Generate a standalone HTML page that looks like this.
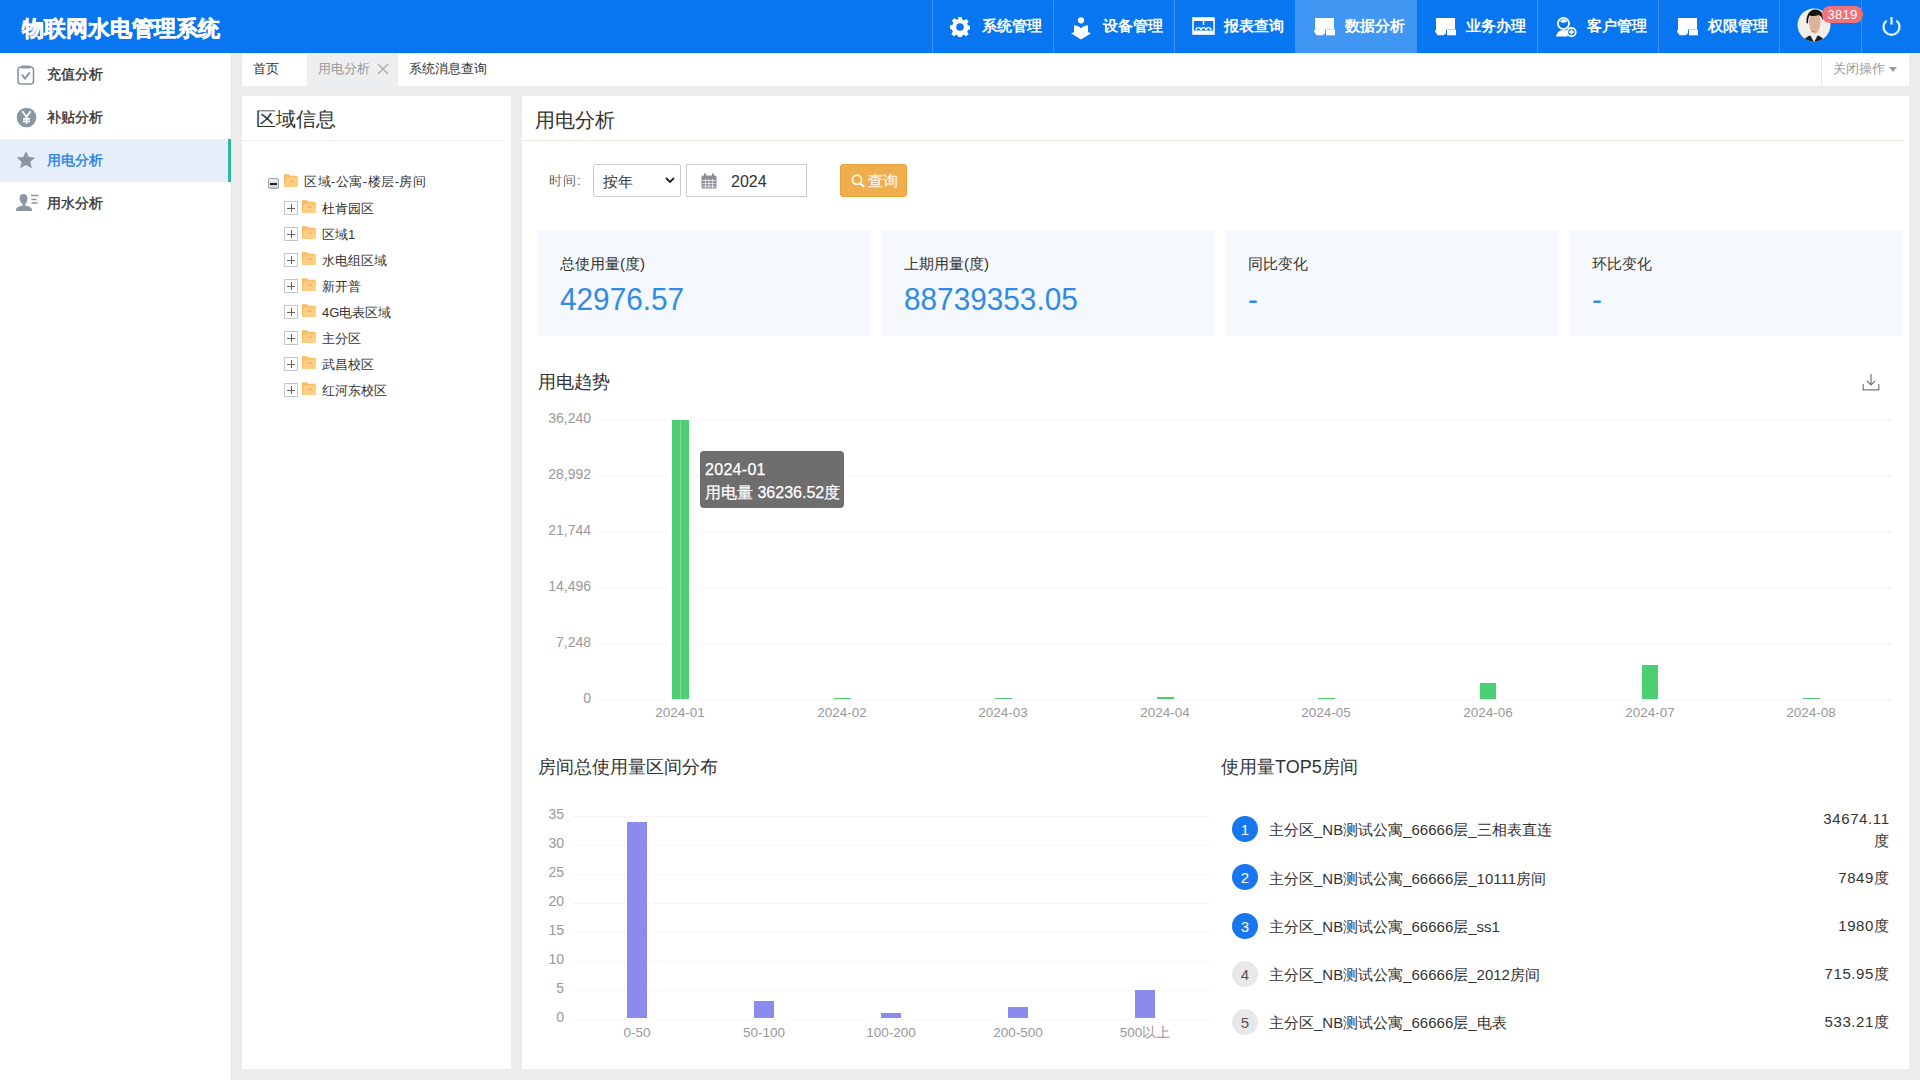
<!DOCTYPE html>
<html><head><meta charset="utf-8">
<style>
*{margin:0;padding:0;box-sizing:border-box}
html,body{width:1920px;height:1080px;overflow:hidden}
body{background:#ededed;font-family:"Liberation Sans",sans-serif;position:relative;color:#333}
.a{position:absolute}
.t{position:absolute;white-space:nowrap;line-height:1}
.nav{position:absolute;top:0;height:53px;width:121px;border-left:1px solid #3d92f2}
.nav .ic{position:absolute}
.nav .tx{position:absolute;top:18px;left:49px;font-size:15px;font-weight:bold;color:#fff;line-height:1;white-space:nowrap}
.mi{position:absolute;left:0;width:231px;height:43px}
.mi .tx{position:absolute;left:47px;top:14px;font-size:14px;line-height:1;color:#333;-webkit-text-stroke:0.35px currentColor}
.tree{position:absolute;font-size:13px;color:#333;line-height:1;white-space:nowrap}
.pbox{position:absolute;width:14px;height:14px;border:1px solid #c3c8ce;background:#fff}
.pbox:before{content:"";position:absolute;left:2px;top:5.5px;width:8px;height:1.3px;background:#666}
.pbox.plus:after{content:"";position:absolute;left:5.5px;top:2px;width:1.3px;height:8px;background:#666}
.card{position:absolute;top:230px;width:333px;height:106px;background:#f5f8fd}
.card .lb{position:absolute;left:22px;top:26px;font-size:15px;line-height:1;color:#333;white-space:nowrap}
.card .vl{position:absolute;left:22px;top:53px;font-size:32px;line-height:1;color:#2f8be6;white-space:nowrap;transform:scaleX(0.93);transform-origin:0 0}
.yl{position:absolute;font-size:14px;color:#999;line-height:1;text-align:right;width:60px}
.xl{position:absolute;font-size:13.5px;color:#999;line-height:1;text-align:center;width:100px}
.gl{position:absolute;height:1px;background:repeating-linear-gradient(to right,#f1f1f1 0 5px,transparent 5px 8px)}
.rk{position:absolute;left:1232px;width:26px;height:26px;border-radius:50%;text-align:center;line-height:28px;font-size:15px}
.rk.b{background:#1777ee;color:#fff}
.rk.g{background:#e8e8e8;color:#555}
.rt{position:absolute;left:1269px;font-size:15px;color:#333;line-height:1;white-space:nowrap}
.rv{position:absolute;right:30.4px;font-size:15px;color:#333;line-height:1;white-space:nowrap;text-align:right;letter-spacing:0.6px}
</style></head><body>

<!-- HEADER -->
<div class="a" style="left:0;top:0;width:1920px;height:53px;background:#0776f0"></div>
<div class="t" style="left:22px;top:17.5px;font-size:22px;font-weight:bold;color:#fff;-webkit-text-stroke:0.5px #fff">物联网水电管理系统</div>

<!-- nav items -->
<div class="nav" style="left:932px">
  <svg class="ic" style="left:17px;top:17px" width="20" height="20" viewBox="0 0 20 20"><path fill="#fff" d="M8.3 0h3.4l.5 2.6 1.9.8 2.2-1.5 2.4 2.4-1.5 2.2.8 1.9 2.6.5v3.4l-2.6.5-.8 1.9 1.5 2.2-2.4 2.4-2.2-1.5-1.9.8-.5 2.6H8.3l-.5-2.6-1.9-.8-2.2 1.5-2.4-2.4 1.5-2.2-.8-1.9L0 11.7V8.3l2.6-.5.8-1.9-1.5-2.2 2.4-2.4 2.2 1.5 1.9-.8zM10 6.2a3.8 3.8 0 1 0 0 7.6 3.8 3.8 0 0 0 0-7.6z"/></svg>
  <div class="tx">系统管理</div>
</div>
<div class="nav" style="left:1053px">
  <svg class="ic" style="left:17px;top:17px" width="20" height="23" viewBox="0 0 20 23"><circle cx="10" cy="3.3" r="3.1" fill="#fff"/><path fill="#fff" d="M3 8.2c2 0 4.5.8 7 3 2.5-2.2 5-3 7-3v7.5c-2.3 0-4.8.7-7 2.5-2.2-1.8-4.7-2.5-7-2.5z"/><path fill="#fff" d="M0 16.3l3-1c2.4.3 4.8 1.2 7 3 2.2-1.8 4.6-2.7 7-3l3 1L10 22.5z"/></svg>
  <div class="tx">设备管理</div>
</div>
<div class="nav" style="left:1174px">
  <svg class="ic" style="left:17px;top:17px" width="23" height="18" viewBox="0 0 23 18"><rect x="1" y="1" width="21" height="16" fill="none" stroke="#fff" stroke-width="1.6"/><rect x="1" y="1" width="21" height="3" fill="#fff"/><rect x="2" y="13.5" width="19" height="3.5" fill="#fff"/><path d="M4 13a2.4 2.4 0 0 1 4.8 0M9.1 13a2.4 2.4 0 0 1 4.8 0M14.2 13a2.4 2.4 0 0 1 4.8 0M11.5 4v4" fill="none" stroke="#fff" stroke-width="1.4"/></svg>
  <div class="tx">报表查询</div>
</div>
<div class="nav" style="left:1295px;background:#4096f3;border-left-color:#4096f3">
  <svg class="ic" style="left:17px;top:17px" width="23" height="19" viewBox="0 0 23 19"><rect x="2" y="1" width="19" height="11.5" fill="#fff"/><path fill="#fff" d="M0.8 14.3L3.5 11H12v5.2L9.6 18.3H3.6z"/><rect x="13" y="12.6" width="9" height="5.7" fill="#fff"/></svg>
  <div class="tx">数据分析</div>
</div>
<div class="nav" style="left:1416px">
  <svg class="ic" style="left:17px;top:17px" width="23" height="19" viewBox="0 0 23 19"><rect x="2" y="1" width="19" height="11.5" fill="#fff"/><path fill="#fff" d="M0.8 14.3L3.5 11H12v5.2L9.6 18.3H3.6z"/><rect x="13" y="12.6" width="9" height="5.7" fill="#fff"/></svg>
  <div class="tx">业务办理</div>
</div>
<div class="nav" style="left:1537px">
  <svg class="ic" style="left:17px;top:17px" width="22" height="21" viewBox="0 0 22 21"><circle cx="8.5" cy="6.5" r="5.6" fill="none" stroke="#fff" stroke-width="1.8"/><path fill="#fff" d="M5 4.5c2 1.5 4.5 1.5 7 0.5L11 2.5 7 2.3z"/><path fill="#fff" d="M1 19.5c.8-4 3-6 6-6.3h5.5v6.3z"/><circle cx="16.5" cy="15.2" r="4.2" fill="none" stroke="#fff" stroke-width="1.8"/><path d="M16.5 12.8v4.8M14.1 15.2h4.8" stroke="#fff" stroke-width="1.8"/></svg>
  <div class="tx">客户管理</div>
</div>
<div class="nav" style="left:1658px">
  <svg class="ic" style="left:17px;top:17px" width="23" height="19" viewBox="0 0 23 19"><rect x="2" y="1" width="19" height="11.5" fill="#fff"/><path fill="#fff" d="M0.8 14.3L3.5 11H12v5.2L9.6 18.3H3.6z"/><rect x="13" y="12.6" width="9" height="5.7" fill="#fff"/></svg>
  <div class="tx">权限管理</div>
</div>
<div class="nav" style="left:1779px;width:83px">
  <svg class="ic" style="left:17px;top:8px" width="34" height="34" viewBox="0 0 34 34"><defs><clipPath id="av"><circle cx="17" cy="17" r="16.5"/></clipPath></defs><g clip-path="url(#av)"><rect width="34" height="34" fill="#f1efec"/><path d="M6 34c1.5-4 4-5.5 7-6.5l4 2.5 4-2.5c3 1 5.5 2.5 7 6.5z" fill="#18202c"/><path d="M13.5 28l3.5 6 3.5-6-3.5 1.5z" fill="#f4f4f4"/><path d="M12 13c0-5 2.5-7 5.8-7s5.7 2.5 5.7 7.5c0 6-2 11.5-5.7 12.3-3.5-.5-5.8-6-5.8-12.8z" fill="#dcb29a"/><path d="M14 22.5c1.2 1 2.6 1.3 4 1" stroke="#b77a6e" stroke-width="0.9" fill="none"/><path d="M9.5 15c-.5-8 3-13.5 9-13.5 5 0 8.5 4 7.5 11-1-3-2.5-5-4.5-5.5-2.5 1.2-6 1.3-9 .5-1 1.5-1.5 4.5-1.5 8z" fill="#15110f"/></g></svg>
</div>
<div class="a" style="left:1822px;top:6px;width:41px;height:17px;background:#ef7378;border-radius:8px;color:#fff;font-size:13px;line-height:17px;text-align:center;letter-spacing:0.3px">3819</div>
<div class="nav" style="left:1861px;width:59px">
  <svg class="ic" style="left:19px;top:16px" width="21" height="21" viewBox="0 0 21 21"><path d="M5.6 4.6a8 8 0 1 0 9.8 0" fill="none" stroke="#dff4ff" stroke-width="2.3"/><path d="M10.5 1v7.5" stroke="#dff4ff" stroke-width="2.3"/></svg>
</div>

<!-- SIDEBAR -->
<div class="a" style="left:0;top:53px;width:231px;height:1027px;background:#fff"></div>
<div class="a" style="left:231px;top:53px;width:1px;height:1027px;background:#e4e4e4"></div>


<!-- sidebar menu -->
<div class="mi" style="top:53px">
  <svg class="a" style="left:17px;top:12px" width="18" height="20" viewBox="0 0 18 20"><rect x="1" y="2" width="15.5" height="17" rx="3" fill="none" stroke="#8a96a2" stroke-width="1.6"/><rect x="4" y="0.6" width="9.5" height="3" rx="1" fill="#8a96a2"/><path d="M4.8 9.5l3.2 4.2 4.8-6.3" fill="none" stroke="#8a96a2" stroke-width="1.9"/></svg>
  <div class="tx">充值分析</div>
</div>
<div class="mi" style="top:96px">
  <svg class="a" style="left:16px;top:11px" width="21" height="21" viewBox="0 0 21 21"><circle cx="10.5" cy="10.5" r="9.8" fill="#8a96a2"/><path d="M6.3 4.3l4.2 5.5 4.2-5.5M10.5 9.8v7.3M7 11.8h7M7 14.3h7" fill="none" stroke="#fff" stroke-width="1.7"/></svg>
  <div class="tx">补贴分析</div>
</div>
<div class="mi" style="top:139px;background:#e6eef9">
  <div class="a" style="left:228px;top:0;width:3px;height:43px;background:#2fb5a2"></div>
  <svg class="a" style="left:16px;top:11px" width="20" height="20" viewBox="0 0 20 20"><path fill="#8a96a2" d="M10 1l2.7 6 6.5.6-4.9 4.3 1.5 6.4L10 15l-5.8 3.3 1.5-6.4L.8 7.6l6.5-.6z"/></svg>
  <div class="tx" style="color:#1b80e8">用电分析</div>
</div>
<div class="mi" style="top:182px">
  <svg class="a" style="left:16px;top:11px" width="24" height="19" viewBox="0 0 24 19"><path fill="#8a96a2" d="M7.5 1c2.6 0 4 2 4 4.6 0 2.6-1 4.8-2.3 5.6v1.2c3.5.7 6.8 2 6.8 4.3V18H0v-1.3c0-2.3 3.3-3.6 6.8-4.3v-1.2C5.5 10.4 3.5 8.2 3.5 5.6 3.5 3 4.9 1 7.5 1z"/><path d="M15 2.5h7.5M15.5 6.5h5M15.5 10h6" stroke="#8a96a2" stroke-width="1.5"/></svg>
  <div class="tx">用水分析</div>
</div>

<!-- TAB BAR -->
<div class="a" style="left:242px;top:54px;width:1667px;height:32px;background:#fff"></div>
<div class="t" style="left:253px;top:62px;font-size:13px;color:#333">首页</div>
<div class="a" style="left:307px;top:54px;width:91px;height:33px;background:#edeef0"></div>
<div class="t" style="left:318px;top:62px;font-size:13px;color:#999">用电分析</div>
<svg class="a" style="left:377px;top:63px" width="12" height="12" viewBox="0 0 12 12"><path d="M1 1l10 10M11 1L1 11" stroke="#aaa" stroke-width="1.3"/></svg>
<div class="t" style="left:409px;top:62px;font-size:13px;color:#333">系统消息查询</div>
<div class="a" style="left:1821px;top:54px;width:1px;height:32px;background:#e6e6e6"></div>
<div class="t" style="left:1833px;top:62px;font-size:13px;color:#999">关闭操作</div>
<svg class="a" style="left:1889px;top:67px" width="8" height="5" viewBox="0 0 8 5"><path d="M0 0h8L4 5z" fill="#999"/></svg>

<!-- LEFT PANEL -->
<div class="a" style="left:242px;top:96px;width:269px;height:973px;background:#fff"></div>
<div class="a" style="left:242px;top:140px;width:263px;height:1px;background:#eeeeee"></div>
<div class="t" style="left:256px;top:109px;font-size:20px;color:#333">区域信息</div>


<!-- tree -->
<div class="a" style="left:268px;top:178px;width:11px;height:11px;border:1px solid #9aa3ad;border-radius:2px;background:linear-gradient(#eef0f3,#c9ced6)"></div>
<div class="a" style="left:270px;top:182.5px;width:7px;height:2px;background:#222"></div>
<svg class="a" style="left:283px;top:173px" width="16" height="15" viewBox="0 0 16 15"><path d="M1 1.2h5l1.3 1.5H14.5V13.8H1z" fill="#f7bb61"/><path d="M3 4.3h12.5l-1.2 9.5H1.2z" fill="#fccd82"/><path d="M6.8 8.2h3.6" stroke="#f2a94a" stroke-width="1.2"/></svg>
<div class="t tree" style="left:304px;top:175px;letter-spacing:0.5px">区域-公寓-楼层-房间</div>
<div class="pbox plus" style="left:284px;top:201px"></div>
<svg class="a" style="left:301px;top:199px" width="16" height="15" viewBox="0 0 16 15"><path d="M1 1.2h5l1.3 1.5H14.5V13.8H1z" fill="#f7bb61"/><path d="M3 4.3h12.5l-1.2 9.5H1.2z" fill="#fccd82"/><path d="M6.8 8.2h3.6" stroke="#f2a94a" stroke-width="1.2"/></svg>
<div class="t tree" style="left:322px;top:202px">杜肯园区</div>
<div class="pbox plus" style="left:284px;top:227px"></div>
<svg class="a" style="left:301px;top:225px" width="16" height="15" viewBox="0 0 16 15"><path d="M1 1.2h5l1.3 1.5H14.5V13.8H1z" fill="#f7bb61"/><path d="M3 4.3h12.5l-1.2 9.5H1.2z" fill="#fccd82"/><path d="M6.8 8.2h3.6" stroke="#f2a94a" stroke-width="1.2"/></svg>
<div class="t tree" style="left:322px;top:228px">区域1</div>
<div class="pbox plus" style="left:284px;top:253px"></div>
<svg class="a" style="left:301px;top:251px" width="16" height="15" viewBox="0 0 16 15"><path d="M1 1.2h5l1.3 1.5H14.5V13.8H1z" fill="#f7bb61"/><path d="M3 4.3h12.5l-1.2 9.5H1.2z" fill="#fccd82"/><path d="M6.8 8.2h3.6" stroke="#f2a94a" stroke-width="1.2"/></svg>
<div class="t tree" style="left:322px;top:254px">水电组区域</div>
<div class="pbox plus" style="left:284px;top:279px"></div>
<svg class="a" style="left:301px;top:277px" width="16" height="15" viewBox="0 0 16 15"><path d="M1 1.2h5l1.3 1.5H14.5V13.8H1z" fill="#f7bb61"/><path d="M3 4.3h12.5l-1.2 9.5H1.2z" fill="#fccd82"/><path d="M6.8 8.2h3.6" stroke="#f2a94a" stroke-width="1.2"/></svg>
<div class="t tree" style="left:322px;top:280px">新开普</div>
<div class="pbox plus" style="left:284px;top:305px"></div>
<svg class="a" style="left:301px;top:303px" width="16" height="15" viewBox="0 0 16 15"><path d="M1 1.2h5l1.3 1.5H14.5V13.8H1z" fill="#f7bb61"/><path d="M3 4.3h12.5l-1.2 9.5H1.2z" fill="#fccd82"/><path d="M6.8 8.2h3.6" stroke="#f2a94a" stroke-width="1.2"/></svg>
<div class="t tree" style="left:322px;top:306px">4G电表区域</div>
<div class="pbox plus" style="left:284px;top:331px"></div>
<svg class="a" style="left:301px;top:329px" width="16" height="15" viewBox="0 0 16 15"><path d="M1 1.2h5l1.3 1.5H14.5V13.8H1z" fill="#f7bb61"/><path d="M3 4.3h12.5l-1.2 9.5H1.2z" fill="#fccd82"/><path d="M6.8 8.2h3.6" stroke="#f2a94a" stroke-width="1.2"/></svg>
<div class="t tree" style="left:322px;top:332px">主分区</div>
<div class="pbox plus" style="left:284px;top:357px"></div>
<svg class="a" style="left:301px;top:355px" width="16" height="15" viewBox="0 0 16 15"><path d="M1 1.2h5l1.3 1.5H14.5V13.8H1z" fill="#f7bb61"/><path d="M3 4.3h12.5l-1.2 9.5H1.2z" fill="#fccd82"/><path d="M6.8 8.2h3.6" stroke="#f2a94a" stroke-width="1.2"/></svg>
<div class="t tree" style="left:322px;top:358px">武昌校区</div>
<div class="pbox plus" style="left:284px;top:383px"></div>
<svg class="a" style="left:301px;top:381px" width="16" height="15" viewBox="0 0 16 15"><path d="M1 1.2h5l1.3 1.5H14.5V13.8H1z" fill="#f7bb61"/><path d="M3 4.3h12.5l-1.2 9.5H1.2z" fill="#fccd82"/><path d="M6.8 8.2h3.6" stroke="#f2a94a" stroke-width="1.2"/></svg>
<div class="t tree" style="left:322px;top:384px">红河东校区</div>

<!-- RIGHT PANEL -->
<div class="a" style="left:522px;top:96px;width:1387px;height:973px;background:#fff"></div>
<div class="a" style="left:522px;top:140px;width:1382px;height:1px;background:#efece0"></div>
<div class="t" style="left:535px;top:110px;font-size:20px;color:#333">用电分析</div>

<!-- form -->
<div class="t" style="left:549px;top:174px;font-size:13px;color:#666;letter-spacing:1px">时间:</div>
<div class="a" style="left:593px;top:164px;width:88px;height:33px;border:1px solid #ccc;border-radius:2px;background:#fff"></div>
<div class="t" style="left:603px;top:174px;font-size:15px;color:#333">按年</div>
<svg class="a" style="left:665px;top:177px" width="10" height="7" viewBox="0 0 10 7"><path d="M1 1l4 4 4-4" fill="none" stroke="#222" stroke-width="1.8"/></svg>
<div class="a" style="left:686px;top:164px;width:121px;height:33px;border:1px solid #ccc;background:#fff"></div>
<svg class="a" style="left:701px;top:173px" width="16" height="16" viewBox="0 0 16 16"><rect x="0.5" y="2.5" width="15" height="13" rx="1.5" fill="#8d8d98"/><rect x="3" y="0.5" width="2" height="4" fill="#8d8d98"/><rect x="11" y="0.5" width="2" height="4" fill="#8d8d98"/><path d="M1.5 7.5h13M1.5 10.5h13M1.5 13.3h13M4.5 6v9M8 6v9M11.5 6v9" stroke="#e8e8ee" stroke-width="0.9"/></svg>
<div class="t" style="left:731px;top:173.5px;font-size:16px;color:#333">2024</div>
<div class="a" style="left:840px;top:164px;width:67px;height:33px;background:#f0ad4e;border:1px solid #eea236;border-radius:3px"></div>
<svg class="a" style="left:851px;top:174px" width="15" height="14" viewBox="0 0 15 14"><circle cx="6" cy="5.8" r="4.6" fill="none" stroke="#fff6e6" stroke-width="1.7"/><path d="M9.3 9.2l3.8 3.9" stroke="#fff6e6" stroke-width="2.1"/></svg>
<div class="t" style="left:868px;top:172.5px;font-size:15px;color:#fff6e6;-webkit-text-stroke:0.3px #fff6e6">查询</div>

<!-- cards -->
<div class="card" style="left:538px"><div class="lb">总使用量(度)</div><div class="vl">42976.57</div></div>
<div class="card" style="left:882px"><div class="lb">上期用量(度)</div><div class="vl">88739353.05</div></div>
<div class="card" style="left:1226px"><div class="lb">同比变化</div><div class="vl">-</div></div>
<div class="card" style="left:1570px"><div class="lb">环比变化</div><div class="vl">-</div></div>


<!-- CHART 1 -->
<div class="t" style="left:538px;top:373px;font-size:18px;color:#333">用电趋势</div>
<svg class="a" style="left:1862px;top:373px" width="18" height="18" viewBox="0 0 18 18"><path d="M9 1v11M5 8l4 4 4-4M1.2 11v5.8h15.6V11" fill="none" stroke="#777" stroke-width="1.2"/></svg>
<div class="gl" style="left:599px;top:420px;width:1293px"></div>
<div class="yl" style="left:531px;top:411px">36,240</div>
<div class="gl" style="left:599px;top:476px;width:1293px"></div>
<div class="yl" style="left:531px;top:467px">28,992</div>
<div class="gl" style="left:599px;top:532px;width:1293px"></div>
<div class="yl" style="left:531px;top:523px">21,744</div>
<div class="gl" style="left:599px;top:588px;width:1293px"></div>
<div class="yl" style="left:531px;top:579px">14,496</div>
<div class="gl" style="left:599px;top:644px;width:1293px"></div>
<div class="yl" style="left:531px;top:635px">7,248</div>
<div class="gl" style="left:599px;top:699px;width:1293px"></div>
<div class="yl" style="left:531px;top:691px">0</div>
<div class="xl" style="left:630px;top:706px">2024-01</div>
<div class="xl" style="left:792px;top:706px">2024-02</div>
<div class="xl" style="left:953px;top:706px">2024-03</div>
<div class="xl" style="left:1115px;top:706px">2024-04</div>
<div class="xl" style="left:1276px;top:706px">2024-05</div>
<div class="xl" style="left:1438px;top:706px">2024-06</div>
<div class="xl" style="left:1600px;top:706px">2024-07</div>
<div class="xl" style="left:1761px;top:706px">2024-08</div>
<div class="a" style="left:672px;top:420px;width:17px;height:279px;background:#4ccf72"></div>
<div class="a" style="left:834px;top:698px;width:17px;height:1px;background:#4ccf72"></div>
<div class="a" style="left:995px;top:698px;width:17px;height:1px;background:#4ccf72"></div>
<div class="a" style="left:1157px;top:697px;width:17px;height:2px;background:#4ccf72"></div>
<div class="a" style="left:1318px;top:698px;width:17px;height:1px;background:#4ccf72"></div>
<div class="a" style="left:1480px;top:683px;width:16px;height:16px;background:#4ccf72"></div>
<div class="a" style="left:1642px;top:665px;width:16px;height:34px;background:#4ccf72"></div>
<div class="a" style="left:1803px;top:698px;width:17px;height:1px;background:#4ccf72"></div>
<div class="a" style="left:680px;top:420px;width:1px;height:279px;background:#8fcfa0"></div>

<div class="a" style="left:700px;top:451px;width:144px;height:57px;background:rgba(60,60,60,0.74);border-radius:4px"></div>
<div class="t" style="left:705px;top:461.5px;font-size:16px;color:#fff;letter-spacing:0.3px;-webkit-text-stroke:0.25px #fff">2024-01</div>
<div class="t" style="left:705px;top:485px;font-size:16px;color:#fff;-webkit-text-stroke:0.25px #fff">用电量 36236.52度</div>

<!-- CHART 2 -->
<div class="t" style="left:538px;top:758px;font-size:18px;color:#333">房间总使用量区间分布</div>
<div class="gl" style="left:573px;top:816px;width:636px"></div>
<div class="yl" style="left:504px;top:807px">35</div>
<div class="gl" style="left:573px;top:845px;width:636px"></div>
<div class="yl" style="left:504px;top:836px">30</div>
<div class="gl" style="left:573px;top:874px;width:636px"></div>
<div class="yl" style="left:504px;top:865px">25</div>
<div class="gl" style="left:573px;top:903px;width:636px"></div>
<div class="yl" style="left:504px;top:894px">20</div>
<div class="gl" style="left:573px;top:932px;width:636px"></div>
<div class="yl" style="left:504px;top:923px">15</div>
<div class="gl" style="left:573px;top:961px;width:636px"></div>
<div class="yl" style="left:504px;top:952px">10</div>
<div class="gl" style="left:573px;top:990px;width:636px"></div>
<div class="yl" style="left:504px;top:981px">5</div>
<div class="gl" style="left:573px;top:1019px;width:636px"></div>
<div class="yl" style="left:504px;top:1010px">0</div>
<div class="xl" style="left:587px;top:1026px">0-50</div>
<div class="a" style="left:627px;top:822px;width:20px;height:196px;background:#8b8bee"></div>
<div class="xl" style="left:714px;top:1026px">50-100</div>
<div class="a" style="left:754px;top:1001px;width:20px;height:17px;background:#8b8bee"></div>
<div class="xl" style="left:841px;top:1026px">100-200</div>
<div class="a" style="left:881px;top:1013px;width:20px;height:5px;background:#8b8bee"></div>
<div class="xl" style="left:968px;top:1026px">200-500</div>
<div class="a" style="left:1008px;top:1007px;width:20px;height:11px;background:#8b8bee"></div>
<div class="xl" style="left:1095px;top:1026px">500以上</div>
<div class="a" style="left:1135px;top:990px;width:20px;height:28px;background:#8b8bee"></div>

<!-- TOP5 -->
<div class="t" style="left:1221px;top:758px;font-size:18px;color:#333">使用量TOP5房间</div>
<div class="rk b" style="top:816px">1</div>
<div class="rt" style="top:822px">主分区_NB测试公寓_66666层_三相表直连</div>
<div class="rk b" style="top:864px">2</div>
<div class="rt" style="top:871px">主分区_NB测试公寓_66666层_10111房间</div>
<div class="rv" style="top:870px">7849度</div>
<div class="rk b" style="top:913px">3</div>
<div class="rt" style="top:919px">主分区_NB测试公寓_66666层_ss1</div>
<div class="rv" style="top:918px">1980度</div>
<div class="rk g" style="top:961px">4</div>
<div class="rt" style="top:967px">主分区_NB测试公寓_66666层_2012房间</div>
<div class="rv" style="top:966px">715.95度</div>
<div class="rk g" style="top:1009px">5</div>
<div class="rt" style="top:1015px">主分区_NB测试公寓_66666层_电表</div>
<div class="rv" style="top:1014px">533.21度</div>
<div class="rv" style="top:811px">34674.11</div>
<div class="rv" style="top:833px">度</div>

</body></html>
